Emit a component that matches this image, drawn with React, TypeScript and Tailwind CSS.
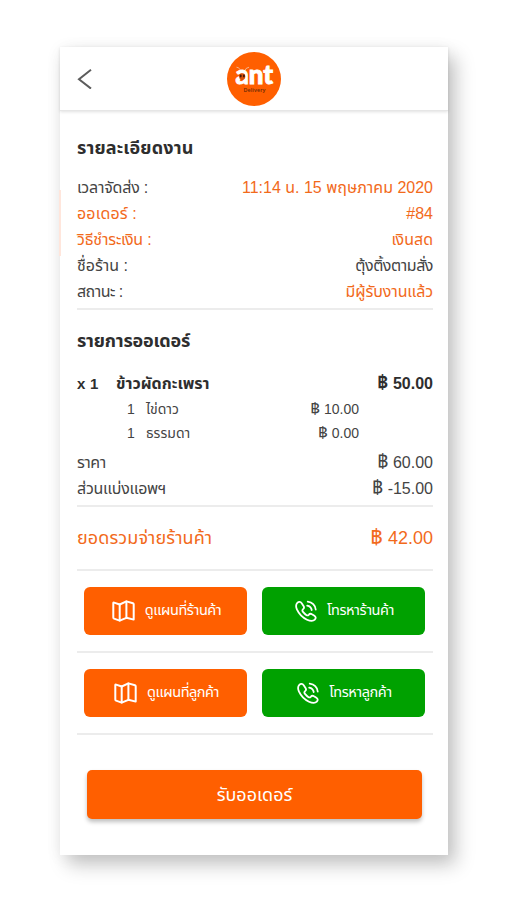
import type { ReactNode } from 'react';

const FONT = 'font-["Liberation_Sans","Noto_Sans_Thai","Noto_Sans",sans-serif]';

const details = [
  {
    label: 'เวลาจัดส่ง :',
    labelClass: 'text-[#444] tracking-[-0.2px]',
    value: '11:14 น. 15 พฤษภาคม 2020',
    valueClass: 'text-[#f26a1b]',
  },
  { label: 'ออเดอร์ :', labelClass: 'text-[#f26a1b] tracking-[0.15px]', value: '#84', valueClass: 'text-[#f26a1b]' },
  {
    label: 'วิธีชำระเงิน :',
    labelClass: 'text-[#f26a1b] tracking-[-0.2px]',
    value: 'เงินสด',
    valueClass: 'text-[#f26a1b]',
  },
  {
    label: 'ชื่อร้าน :',
    labelClass: 'text-[#444]',
    value: 'ตุ้งติ้งตามสั่ง',
    valueClass: 'text-[#444] tracking-[-0.45px]',
  },
  {
    label: 'สถานะ :',
    labelClass: 'text-[#444] tracking-[-0.55px]',
    value: 'มีผู้รับงานแล้ว',
    valueClass: 'text-[#f26a1b] tracking-[-0.1px]',
  },
];

const MapIcon = () => (
  <svg
    className="h-[22px] w-[23px] shrink-0"
    viewBox="0 0 23 22"
    fill="none"
    stroke="currentColor"
    strokeWidth="2"
    strokeLinejoin="round"
    strokeLinecap="round"
  >
    <path d="M1.3 3.2Q1.3 2.4 2.1 2.6L7.7 4.5 14.4 1.4 21 3.3Q21.7 3.5 21.7 4.2V19.6L14.4 17.8 7.7 20.6 2 18.6Q1.3 18.4 1.3 17.6Z" />
    <path d="M7.7 4.5V20.6M14.4 1.4V17.8" />
  </svg>
);

const PhoneIcon = () => (
  <svg
    className="h-[22px] w-[22px] shrink-0"
    viewBox="0 0 22 22"
    fill="none"
    stroke="currentColor"
    strokeWidth="1.8"
    strokeLinejoin="round"
    strokeLinecap="round"
  >
    <path d="M2.3 2.9C3.7 1.5 5.6 1.6 6.7 3.2L8.5 5.9C9.4 7.3 9.1 8.3 8.1 9.1 7.1 10 7.2 10.9 8 11.9 9.2 13.4 10.4 14.5 11.6 15.2 12.6 15.8 13.2 15.4 13.9 14.6 14.7 13.6 15.8 13.5 17 14.3L19.4 15.8C21 16.9 21.1 18.4 19.8 19.7 18.2 21.3 15.3 21.2 12 19.7 7.7 17.7 3.9 13.8 1.9 9.4 .7 6.5 .8 4.4 2.3 2.9Z" />
    <path d="M12.2 5.6C14.8 6 16.3 7.5 16.7 10M12.7 1.7C17.4 2.3 20.1 5.1 20.7 9.5" />
  </svg>
);

const Logo = () => (
  <svg className="h-[54px] w-[54px]" viewBox="0 0 54 54">
    <circle cx="27" cy="27" r="27" fill="#ff5f00" />
    <path d="M14 20Q13 15.5 9.5 15.2M17 20Q18.5 15.5 22 15.2" stroke="#f3b48f" strokeWidth="1" fill="none" />
    <text
      x="8.5"
      y="31.8"
      fontFamily="Lato, sans-serif"
      fontWeight="900"
      fontSize="26"
      fill="#fff"
      stroke="#fff"
      strokeWidth="0.9"
      textLength="37.5"
      lengthAdjust="spacingAndGlyphs"
    >
      ant
    </text>
    <ellipse cx="15.2" cy="24.6" rx="3.1" ry="3.4" fill="#d9500a" />
    <ellipse cx="13.7" cy="24" rx="1" ry="1.4" fill="#40180a" />
    <ellipse cx="16.9" cy="24" rx="1" ry="1.4" fill="#40180a" />
    <text
      x="16.5"
      y="39.7"
      fontFamily="Open Sans, sans-serif"
      fontWeight="600"
      fontSize="5.4"
      fill="#6b2a08"
      textLength="22"
    >
      Delivery
    </text>
  </svg>
);

const Price = ({ children }: { children: string }) => (
  <span className="whitespace-nowrap">
    <span className="text-[1.2em] leading-none">฿</span> {children}
  </span>
);

const Action = ({ color, icon, children }: { color: string; icon: ReactNode; children: ReactNode }) => (
  <button
    className={`flex h-12 w-[163px] items-center justify-center gap-2.5 rounded-md pl-0.5 text-[14.5px] tracking-[-0.45px] text-white ${color}`}
  >
    {icon}
    <span className="whitespace-nowrap">{children}</span>
  </button>
);

const Actions = ({ map, call }: { map: string; call: string }) => (
  <div className="flex h-[82px] items-center justify-between border-b-2 border-[#ececec] pr-2 pl-[7px]">
    <Action color="bg-[#ff5f00]" icon={<MapIcon />}>
      {map}
    </Action>
    <Action color="bg-[#00a100]" icon={<PhoneIcon />}>
      {call}
    </Action>
  </div>
);

export default function App() {
  return (
    <div className={`h-[900px] w-[507px] overflow-hidden bg-white pt-[47px] pl-[60px] ${FONT}`}>
      <main className="relative flex h-[808px] w-[388px] flex-col bg-white shadow-[8px_10px_18px_rgba(0,0,0,0.22),0_2px_16px_rgba(0,0,0,0.06)]">
        <span className="absolute top-[143px] -left-px h-[66px] w-0.5 bg-[#ffe6dc]" />

        <header className="grid h-[64px] grid-cols-3 items-center border-b border-[#e6e6e6] px-[17px] shadow-[0_1px_3px_rgba(0,0,0,0.12)]">
          <svg className="h-5 w-4" viewBox="0 0 16 20" fill="none" stroke="#5c5c5c" strokeWidth="2">
            <path d="M14 0.8 2 10.2 14 19.6" />
          </svg>
          <div className="flex justify-center">
            <Logo />
          </div>
        </header>

        <section className="mr-[15px] ml-[17px] h-[199px] border-b-2 border-[#ececec] pt-[24px]">
          <h1 className="h-[40px] text-[18px] leading-[26px] font-bold tracking-[0.15px] text-[#2e2e2e]">
            รายละเอียดงาน
          </h1>
          {details.map((row) => (
            <div key={row.label} className="flex h-[26px] items-center justify-between text-base whitespace-nowrap">
              <span className={row.labelClass}>{row.label}</span>
              <span className={row.valueClass}>{row.value}</span>
            </div>
          ))}
        </section>

        <section className="mr-[15px] ml-[17px] h-[197px] border-b-2 border-[#ececec] pt-[18px] text-[#444]">
          <h2 className="h-[43px] text-[18px] leading-[26px] font-bold tracking-[-0.2px] text-[#2e2e2e]">
            รายการออเดอร์
          </h2>
          <div className="flex h-[26px] items-center justify-between text-base font-bold text-[#2e2e2e]">
            <div className="flex items-center">
              <span className="w-[39px] text-[15px] tracking-[0.3px]">x 1</span>
              <span>ข้าวผัดกะเพรา</span>
            </div>
            <Price>50.00</Price>
          </div>
          <div className="flex h-6 items-center justify-between pr-[74px] pl-[50px] text-sm">
            <div className="flex items-center">
              <span className="w-[19px]">1</span>
              <span>ไข่ดาว</span>
            </div>
            <Price>10.00</Price>
          </div>
          <div className="flex h-6 items-center justify-between pr-[74px] pl-[50px] text-sm">
            <div className="flex items-center">
              <span className="w-[19px]">1</span>
              <span>ธรรมดา</span>
            </div>
            <Price>0.00</Price>
          </div>
          <div className="mt-[5px] flex h-[26px] items-center justify-between text-base">
            <span className="tracking-[-0.5px]">ราคา</span>
            <Price>60.00</Price>
          </div>
          <div className="flex h-[26px] items-center justify-between text-base">
            <span className="tracking-[-0.25px]">ส่วนแบ่งแอพฯ</span>
            <Price>-15.00</Price>
          </div>
        </section>

        <section className="mr-[15px] ml-[17px] flex h-16 items-center justify-between border-b-2 border-[#ececec] text-lg text-[#f26a1b]">
          <span className="tracking-[0.1px]">ยอดรวมจ่ายร้านค้า</span>
          <Price>42.00</Price>
        </section>

        <section className="mr-[15px] ml-[17px]">
          <Actions map="ดูแผนที่ร้านค้า" call="โทรหาร้านค้า" />
          <Actions map="ดูแผนที่ลูกค้า" call="โทรหาลูกค้า" />
        </section>

        <button className="mr-[26px] ml-[27px] mt-[35px] h-[49px] rounded-[5px] bg-[#ff5f00] text-lg text-white shadow-[0_3px_4px_rgba(0,0,0,0.25)]">
          รับออเดอร์
        </button>
      </main>
    </div>
  );
}
